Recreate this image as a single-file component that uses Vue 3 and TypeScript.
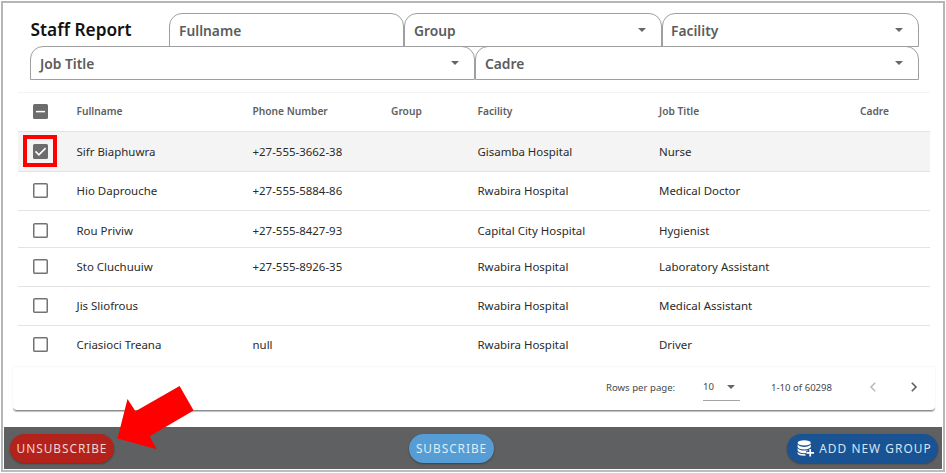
<script setup lang="ts">
interface Staff {
  name: string
  phone: string
  group: string
  facility: string
  job: string
  cadre: string
  checked: boolean
  size: string
}

const headers: string[] = ['Fullname', 'Phone Number', 'Group', 'Facility', 'Job Title', 'Cadre']

const staff: Staff[] = [
  { name: 'Sifr Biaphuwra', phone: '+27-555-3662-38', group: '', facility: 'Gisamba Hospital', job: 'Nurse', cadre: '', checked: true, size: 'r1' },
  { name: 'Hio Daprouche', phone: '+27-555-5884-86', group: '', facility: 'Rwabira Hospital', job: 'Medical Doctor', cadre: '', checked: false, size: 'r2' },
  { name: 'Rou Priviw', phone: '+27-555-8427-93', group: '', facility: 'Capital City Hospital', job: 'Hygienist', cadre: '', checked: false, size: 'r3' },
  { name: 'Sto Cluchuuiw', phone: '+27-555-8926-35', group: '', facility: 'Rwabira Hospital', job: 'Laboratory Assistant', cadre: '', checked: false, size: 'r4' },
  { name: 'Jis Sliofrous', phone: '', group: '', facility: 'Rwabira Hospital', job: 'Medical Assistant', cadre: '', checked: false, size: 'r5' },
  { name: 'Criasioci Treana', phone: 'null', group: '', facility: 'Rwabira Hospital', job: 'Driver', cadre: '', checked: false, size: 'r6' },
]
</script>

<template>
  <div class="frame">
    <div class="filters">
      <div class="line top">
        <h1 class="title"><span>Staff Report</span></h1>
        <div class="field f-name"><span>Fullname</span></div>
        <div class="field f-group"><span>Group</span><i class="caret"></i></div>
        <div class="field f-facility"><span>Facility</span><i class="caret"></i></div>
      </div>
      <div class="line">
        <div class="field f-job"><span>Job Title</span><i class="caret"></i></div>
        <div class="field f-cadre"><span>Cadre</span><i class="caret"></i></div>
      </div>
    </div>

    <div class="table">
      <div class="row head">
        <svg class="box" viewBox="0 0 15 15">
          <rect width="15" height="15" rx="1.6" fill="#6c6c6c" />
          <path d="M3 7.6h9" stroke="#fff" stroke-width="1.5" />
        </svg>
        <span v-for="h in headers" :key="h" class="cell">{{ h }}</span>
      </div>
      <div v-for="s in staff" :key="s.name" class="row" :class="[s.size, { selected: s.checked }]">
        <svg class="box" viewBox="0 0 15 15">
          <template v-if="s.checked">
            <rect width="15" height="15" rx="1.6" fill="#6c6c6c" />
            <path d="M2.5 7.4 5.9 10.8l6.7-6.7" fill="none" stroke="#fff" stroke-width="1.6" />
          </template>
          <rect v-else x=".75" y=".75" width="13.5" height="13.5" rx="1.1" fill="#fff" stroke="#737373" stroke-width="1.5" />
        </svg>
        <span class="cell">{{ s.name }}</span>
        <span class="cell">{{ s.phone }}</span>
        <span class="cell">{{ s.group }}</span>
        <span class="cell">{{ s.facility }}</span>
        <span class="cell">{{ s.job }}</span>
        <span class="cell">{{ s.cadre }}</span>
        <i v-if="s.checked" class="highlight"></i>
      </div>
    </div>
    <div class="pager">
      <span class="rpp">Rows per page:</span>
      <div class="select"><span>10</span><i class="caret"></i></div>
      <span class="range">1-10 of 60298</span>
      <svg class="chev prev" viewBox="0 0 8 10"><path d="M6.2 .8 2 5l4.2 4.2" fill="none" stroke="#b5b5b5" stroke-width="1.4" /></svg>
      <svg class="chev" viewBox="0 0 8 10"><path d="M1.8 .8 6 5 1.8 9.2" fill="none" stroke="#5c5c5c" stroke-width="1.6" /></svg>
    </div>

    <div class="bar">
      <button class="btn red"><span>UNSUBSCRIBE</span></button>
      <button class="btn sky"><span>SUBSCRIBE</span></button>
      <button class="btn navy">
        <svg class="db" viewBox="0 0 17 17">
          <ellipse cx="7.2" cy="2.9" rx="6.6" ry="2.6" fill="#fff" />
          <path d="M.6 4.6c1 1.8 4 2.3 6.6 2.3s5.6-.5 6.6-2.3v2.3c-.5 1.7-3.6 2.500-6.600 2.500s-6.100-.8-6.600-2.500zM.6 8.300c1 1.800 4 2.300 6.600 2.300 1.500 0 2.700-.1 3.400-.4v2.600c-1 .3-2.200.4-3.400.4-3 0-6.100-.9-6.600-2.600zM.6 12c1 1.600 4 2.200 6.600 2.200h1.300v1.600H7.200c-3 0-6.100-.8-6.600-2.200z" fill="#fff" />
          <path d="M13.2 8.500v8.500M9 12.900H17" stroke="#1a5394" stroke-width="3.400" />
          <path d="M13.2 9v7.600M9.400 12.900H17" stroke="#fff" stroke-width="1.700" />
        </svg>
        <span>ADD NEW GROUP</span>
      </button>
    </div>

    <svg class="arrow" viewBox="0 0 78 65">
      <path d="M.5 53.500 10.500 14l8 12.300L62.600 1l14 24.500-43.900 25.800 7 13z" fill="#fe0000" />
    </svg>
  </div>
</template>

<style>
body {
  background: #fff;
}
</style>

<style scoped>
* {
  box-sizing: border-box;
}

.frame {
  position: relative;
  width: 944px;
  height: 471px;
  margin: 1px 0 0 1px;
  border: 2px solid #b5b7b7;
  border-bottom-color: #bcbcbc;
  font-family: 'Noto Sans', 'Open Sans', sans-serif;
  color: #2b2b2b;
  display: flex;
  flex-direction: column;
}

.filters {
  padding: 10px 24px 0 27px;
  height: 89px;
}

.line {
  display: flex;
  height: 33px;
}

.title {
  width: 139px;
  margin: 0;
  padding-left: 0.5px;
  font-size: 17.3px;
  line-height: 34px;
  font-weight: 600;
  color: #111;
  white-space: nowrap;
}

.field {
  display: flex;
  align-items: center;
  justify-content: space-between;
  height: 34px;
  padding: 0 15px 0 9px;
  border: 1px solid #9f9f9f;
  border-radius: 13px 13px 0 0;
  font-size: 13.8px;
  font-weight: 600;
  color: #5c5c5c;
}

.f-name { width: 235px; }
.f-group { width: 258px; }
.f-facility { width: 257px; padding-left: 8px; }
.f-job { width: 445px; }
.f-cadre { width: 444px; }

.caret {
  width: 0;
  height: 0;
  border: 4px solid transparent;
  border-top-color: #666;
  border-bottom: 0;
}

.table {
  height: 274px;
  margin: 0 13px 0 15px;
}

.row {
  position: relative;
  display: grid;
  grid-template-columns: 43.5px 176px 138.5px 86.5px 181.5px 201px 1fr;
  align-items: center;
  padding: 0 0 2px 15px;
  border-top: 1px solid #e3e3e3;
  font-size: 11.46px;
  white-space: nowrap;
}

.head {
  height: 39px;
  border-top-color: #f3f3f3;
  font-size: 10.2px;
  font-weight: 600;
  color: #606060;
}

.r1 { height: 40px; padding-bottom: 1px; }
.r2 { height: 39px; }
.r3 { height: 37px; padding-top: 2px; padding-bottom: 0; }
.r4 { height: 39px; }
.r5 { height: 39px; }
.r6 { height: 40px; }

.selected {
  background: #f4f4f4;
}

.box {
  width: 15px;
  height: 15px;
}

.highlight {
  position: absolute;
  left: 5px;
  top: 3px;
  width: 34px;
  height: 32px;
  border: 4px solid #fe0000;
}

.pager {
  display: flex;
  align-items: center;
  width: 922px;
  height: 45px;
  margin-left: 10px;
  padding: 0 0 3px 593px;
  border-top: 1px solid #f8f8f8;
  border-bottom: 1px solid #8d8d8d;
  border-radius: 0 0 4px 4px;
  box-shadow: 0 1px 1px rgba(0, 0, 0, 0.25);
  clip-path: inset(0 -3px -3px -3px);
  font-size: 9.6px;
  color: #484848;
  white-space: nowrap;
}

.rpp {
  width: 97px;
}

.select {
  display: flex;
  align-items: center;
  justify-content: space-between;
  width: 37px;
  height: 27px;
  padding-right: 5px;
  margin-right: 31px;
  border-bottom: 1px solid #a5a5a5;
}

.range {
  width: 98px;
}

.chev {
  width: 8px;
  height: 10px;
}

.prev {
  margin-right: 33px;
}

.bar {
  display: flex;
  align-items: center;
  justify-content: space-between;
  height: 42px;
  margin: 16px 1px 0;
  padding: 0 4px 0 6px;
  background: #5f6062;
}

.btn {
  display: flex;
  align-items: center;
  justify-content: center;
  height: 29px;
  padding: 0;
  border: 0;
  border-radius: 15px;
  font-family: inherit;
  font-size: 11.9px;
  letter-spacing: 0.94px;
  color: #fff;
  white-space: nowrap;
  box-shadow: 0 1px 2px rgba(0, 0, 0, 0.35);
}

.red {
  width: 104px;
  background: #b4231b;
  color: #f2d5d3;
}

.sky {
  width: 85px;
  margin-right: auto;
  margin-left: 295px;
  background: #559dd4;
  color: #deedf8;
}

.navy {
  width: 151px;
  gap: 5px;
  padding-left: 4px;
  background: #1a5394;
  color: #d8e4f1;
  letter-spacing: 1.05px;
}

.db {
  width: 17px;
  height: 17px;
}

.arrow {
  position: absolute;
  left: 114px;
  top: 382px;
  width: 78px;
  height: 65px;
}
</style>
